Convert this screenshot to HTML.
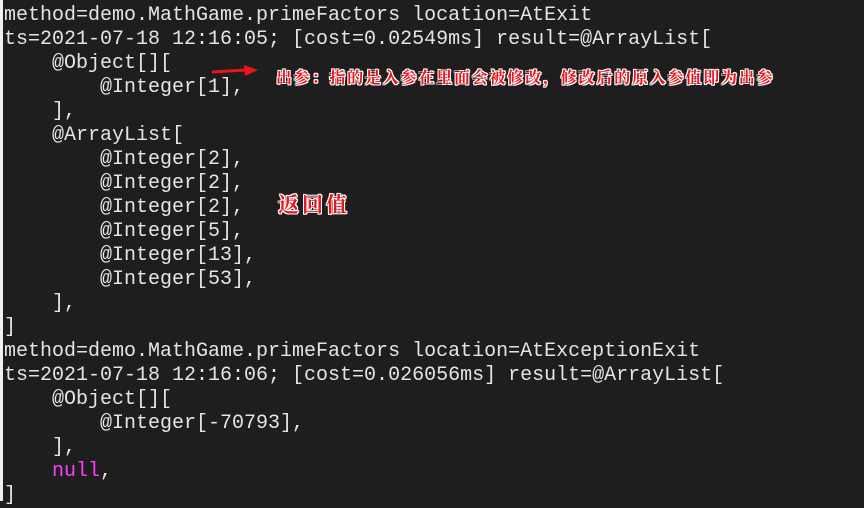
<!DOCTYPE html>
<html><head><meta charset="utf-8"><style>
html,body{margin:0;padding:0;}
body{width:864px;height:501px;background:#1e1e1e;position:relative;overflow:hidden;}
.bl{position:absolute;left:0;top:0;width:3px;height:501px;background:#f0f0f0;}
pre{position:absolute;left:4px;top:4px;margin:0;font-family:"Liberation Mono",monospace;font-size:20px;line-height:24px;color:#e4e4e4;}
.n{color:#ff3cff;}
.ann{position:absolute;font-family:"Liberation Sans","Noto Serif CJK SC",serif;font-weight:bold;color:#e8141e;text-shadow:-1px -1px 0 #fff,1px -1px 0 #fff,-1px 1px 0 #fff,1px 1px 0 #fff,0 1px 0 #fff,0 -1px 0 #fff,1px 0 0 #fff,-1px 0 0 #fff;white-space:nowrap;}
</style></head><body>
<div class="bl"></div>
<pre>method=demo.MathGame.primeFactors location=AtExit
ts=2021-07-18 12:16:05; [cost=0.02549ms] result=@ArrayList[
    @Object[][
        @Integer[1],
    ],
    @ArrayList[
        @Integer[2],
        @Integer[2],
        @Integer[2],
        @Integer[5],
        @Integer[13],
        @Integer[53],
    ],
]
method=demo.MathGame.primeFactors location=AtExceptionExit
ts=2021-07-18 12:16:06; [cost=0.026056ms] result=@ArrayList[
    @Object[][
        @Integer[-70793],
    ],
    <span class="n">null</span>,
]</pre>
<svg style="position:absolute;left:210px;top:64px" width="50" height="16"><path d="M2 8 L36 6" stroke="#e8141e" stroke-width="3"/><path d="M34 1 L48 6 L35 12 Z" fill="#e8141e"/></svg>
<div class="ann" style="left:276px;top:65px;font-size:16px;letter-spacing:1.8px;">出参：指的是入参在里面会被修改，修改后的原入参值即为出参</div>
<div class="ann" style="left:278px;top:189px;font-size:21px;letter-spacing:3px;">返回值</div>
</body></html>
